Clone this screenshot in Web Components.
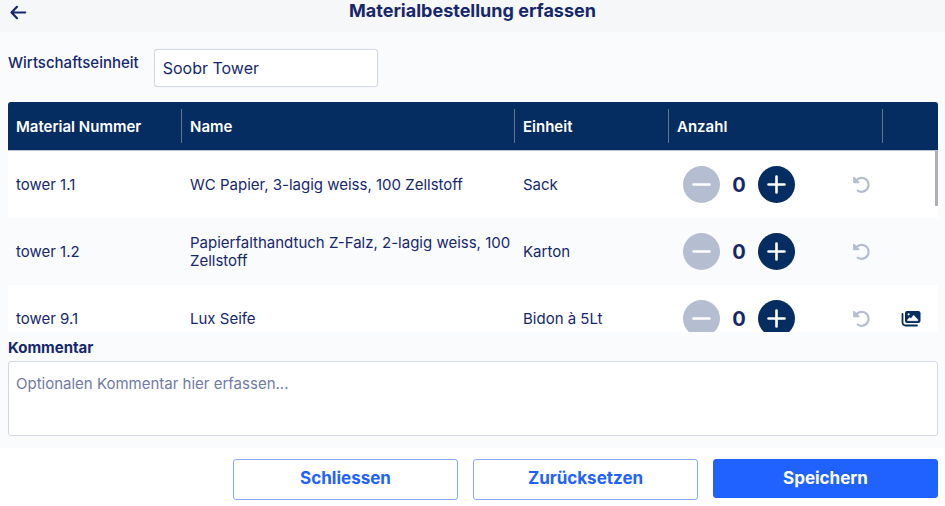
<!DOCTYPE html>
<html lang="de">
<head>
<meta charset="utf-8">
<meta name="viewport" content="width=device-width, initial-scale=1">
<title>Materialbestellung erfassen</title>
<style>
  :root {
    --ink: #16286c;
    --navy: #062d61;
    --blue: #1f62ff;
    --muted: #b5bed0;
    --line: #d3d8e3;
    --surface: #fafbfd;
  }
  body { margin: 0; font-family: Inter, "Liberation Sans", sans-serif; font-size: 15px; line-height: 18px; color: var(--ink); background: #fff; }
</style>
</head>
<body>
<order-page>
  <page-header slot="header">Materialbestellung erfassen</page-header>
  <text-field label="Wirtschaftseinheit" value="Soobr Tower"></text-field>
  <material-table></material-table>
  <comment-field label="Kommentar" placeholder="Optionalen Kommentar hier erfassen..."></comment-field>
  <action-button slot="footer">Schliessen</action-button>
  <action-button slot="footer">Zurücksetzen</action-button>
  <action-button slot="footer" primary>Speichern</action-button>
</order-page>

<script>
class BaseElement extends HTMLElement {
  constructor() { super(); this.attachShadow({ mode: 'open' }); }
  connectedCallback() { this.shadowRoot.innerHTML = '<style>*{box-sizing:border-box}</style>' + this.render(); }
}

customElements.define('order-page', class extends BaseElement {
  render() {
    return `<style>
      :host { display: flex; flex-direction: column; height: 100vh; min-height: 440px; }
      main { flex: 1; min-height: 0; display: flex; flex-direction: column; padding: 17px 7px 12px 8px; background: var(--surface); }
      ::slotted(material-table) { flex: 1; min-height: 0; margin-top: 15px; }
      footer { display: flex; justify-content: flex-end; align-items: flex-start; gap: 15px; padding: 11px 7px 6px 8px; }
    </style>
    <slot name="header"></slot>
    <main><slot></slot></main>
    <footer><slot name="footer"></slot></footer>`;
  }
});

customElements.define('page-header', class extends BaseElement {
  render() {
    return `<style>
      :host { display: block; background: #f6f7f9; }
      header { display: grid; grid-template-columns: 40px 1fr 40px; height: 32px; }
      button { border: 0; padding: 0 0 0 8px; height: 24px; background: none; color: var(--ink); text-align: left; }
      svg { display: block; }
      h1 { margin: 0; font-size: 18px; line-height: 22px; font-weight: 700; text-align: center; }
    </style>
    <header>
      <button type="button" aria-label="Zurück"><svg width="20" height="20" viewBox="0 0 20 20" fill="none" stroke="currentColor" stroke-width="2.200" stroke-linecap="round" stroke-linejoin="round"><path d="M17.200 10.500H4M9 4.800 3.500 10.500 9 16.200"/></svg></button>
      <h1><slot></slot></h1>
    </header>`;
  }
});

customElements.define('text-field', class extends BaseElement {
  render() {
    return `<style>
      :host { display: flex; gap: 15px; }
      label { padding-top: 5px; font-weight: 500; }
      input { width: 224px; height: 38px; padding: 0 8px; font: inherit; font-size: 16px; color: inherit; background: #fff; border: 1px solid var(--line); border-radius: 3px; box-shadow: 0 0 1px var(--line); outline: none; }
    </style>
    <label for="field">${this.getAttribute('label')}</label>
    <input id="field" type="text" value="${this.getAttribute('value')}">`;
  }
});

customElements.define('quantity-stepper', class extends BaseElement {
  render() {
    return `<style>
      :host { display: flex; align-items: center; }
      button { width: 37px; height: 37px; flex: none; padding: 0; border: 0; border-radius: 50%; background: var(--navy); color: #fff; display: grid; place-items: center; }
      button:disabled { background: var(--muted); }
      output { width: 38px; text-align: center; font-size: 20px; line-height: 24px; font-weight: 700; }
      .reset { margin-left: auto; background: none; color: var(--muted); }
      .reset:disabled { background: none; }
    </style>
    <button type="button" disabled aria-label="Weniger"><svg width="19" height="19" viewBox="0 0 19 19" fill="none" stroke="currentColor" stroke-width="2.600" stroke-linecap="round"><path d="M1.500 9.500h16"/></svg></button>
    <output>0</output>
    <button type="button" aria-label="Mehr"><svg width="19" height="19" viewBox="0 0 19 19" fill="none" stroke="currentColor" stroke-width="2.600" stroke-linecap="round"><path d="M1.500 9.500h16M9.500 1.500v16"/></svg></button>
    <button type="button" class="reset" disabled aria-label="Menge zurücksetzen"><svg width="19" height="19" viewBox="0 0 19 19" fill="none" stroke="currentColor" stroke-width="2.200" stroke-linecap="round" stroke-linejoin="round"><path d="M4.500 5A7 7 0 1 1 5.700 15.600"/><path d="M1.900 2.600v4.900h4.900z" fill="currentColor" stroke-width="1.600"/></svg></button>`;
  }
});

const materials = [
  { number: 'tower 1.1', name: 'WC Papier, 3-lagig weiss, 100 Zellstoff', unit: 'Sack' },
  { number: 'tower 1.2', name: 'Papierfalthandtuch Z-Falz, 2-lagig weiss, 100 Zellstoff', unit: 'Karton' },
  { number: 'tower 9.1', name: 'Lux Seife', unit: 'Bidon à 5Lt', images: true }
];

customElements.define('material-table', class extends BaseElement {
  render() {
    const gallery = `<button type="button" aria-label="Bilder anzeigen"><svg width="20" height="18" viewBox="0 0 20 18"><path d="M1.500 4v8.500a3 3 0 0 0 3 3H16" fill="none" stroke="currentColor" stroke-width="1.800" stroke-linecap="round"/><rect x="4" y="1" width="15.500" height="12" rx="2.200" fill="currentColor"/><circle cx="7.600" cy="4.300" r="1.100" fill="#fff"/><path d="M6.600 10.700V9.800L8.600 7.600l1.300 1.200L12.600 5.200 16.900 9.800v.9z" fill="#fff" stroke="#fff" stroke-width=".6" stroke-linejoin="round"/></svg></button>`;
    const rows = materials.map(m => `<tr><td>${m.number}</td><td>${m.name}</td><td>${m.unit}</td>
      <td><quantity-stepper></quantity-stepper></td><td class="media">${m.images ? gallery : ''}</td></tr>`).join('');
    return `<style>
      :host { display: block; position: relative; }
      .scroll { height: 100%; overflow: auto; scrollbar-width: none; border-radius: 3px 3px 0 0; }
      table { width: 100%; table-layout: fixed; border-collapse: separate; border-spacing: 0; }
      .number { width: 174px; } .unit { width: 154px; } .count { width: 214px; } .extra { width: 55px; }
      th, td { padding: 0 8px; text-align: left; vertical-align: middle; }
      thead th { position: sticky; top: 0; z-index: 1; height: 49px; padding-top: 2px; background: linear-gradient(#64748c, #64748c) right center / 1px 34px no-repeat var(--navy); color: #fff; font-weight: 600; border-bottom: 1px solid #b9c3d2; }
      thead th:last-child { background: var(--navy); }
      td { height: 67px; }
      td:nth-child(2) { padding-right: 2px; }
      td:nth-child(4) { padding: 0 3px 0 14px; }
      tr:nth-child(odd) td { background: #fff; }
      td.media { padding: 0; }
      button { display: block; margin: 0 auto; padding: 0; border: 0; background: none; color: var(--navy); }
      svg { display: block; }
      .thumb { position: absolute; z-index: 2; top: 49px; right: 0; width: 3px; height: 55px; background: #b0b0b2; }
    </style>
    <div class="scroll"><table>
      <colgroup><col class="number"><col><col class="unit"><col class="count"><col class="extra"></colgroup>
      <thead><tr><th>Material Nummer</th><th>Name</th><th>Einheit</th><th>Anzahl</th><th></th></tr></thead>
      <tbody>${rows}</tbody>
    </table></div><div class="thumb"></div>`;
  }
});

customElements.define('comment-field', class extends BaseElement {
  render() {
    return `<style>
      :host { display: block; padding-top: 7px; }
      label { display: block; font-weight: 700; }
      textarea { display: block; width: 100%; height: 75px; margin-top: 4px; padding: 13px 7px; font: inherit; color: inherit; background: #fff; border: 1px solid var(--line); border-radius: 3px; resize: none; outline: none; }
      textarea::placeholder { color: #6f7ba3; opacity: 1; }
    </style>
    <label for="comment">${this.getAttribute('label')}</label>
    <textarea id="comment" placeholder="${this.getAttribute('placeholder')}"></textarea>`;
  }
});

customElements.define('action-button', class extends BaseElement {
  render() {
    return `<style>
      :host { display: block; flex: 0 1 225px; }
      button { display: block; width: 100%; height: 41px; padding: 0 8px 3px; font: inherit; font-size: 17px; line-height: 20px; font-weight: 700; color: var(--blue); background: #fff; border: 1px solid #86a9fa; border-radius: 3px; }
      :host([primary]) button { height: 39px; padding-bottom: 1px; color: #fff; background: var(--blue); border-color: var(--blue); }
    </style>
    <button type="button"><slot></slot></button>`;
  }
});
</script>
</body>
</html>
